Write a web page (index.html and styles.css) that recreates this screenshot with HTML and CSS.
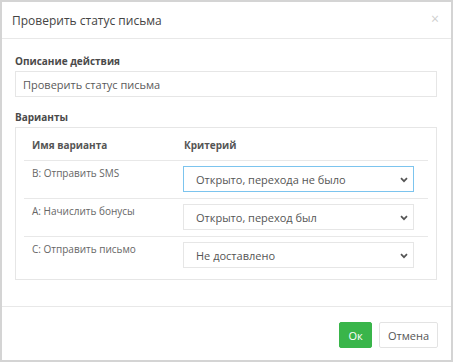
FILE: index.html
```html
<!DOCTYPE html>
<html lang="ru">
<head>
    <meta charset="UTF-8">
    <meta name="viewport" content="width=device-width, initial-scale=1.0">
    <title>Проверить статус письма</title>
    <link rel="stylesheet" href="styles.css">
</head>
<body>
    <div class="modal">
        <div class="modal-header">
            <span class="modal-title">Проверить статус письма</span>
            <span class="close">&times;</span>
        </div>
        <div class="modal-body">
            <label class="field-label">Описание действия</label>
            <input class="text-input" type="text" value="Проверить статус письма">

            <label class="field-label variants-label">Варианты</label>
            <div class="panel">
                <table class="variants">
                    <thead>
                        <tr>
                            <th class="col-name">Имя варианта</th>
                            <th class="col-crit">Критерий</th>
                        </tr>
                    </thead>
                    <tbody>
                        <tr>
                            <td class="name">B: Отправить SMS</td>
                            <td class="crit">
                                <div class="select focused">
                                    <span>Открыто, перехода не было</span>
                                    <svg class="chevron" width="8" height="6" viewBox="0 0 8 6"><path d="M1 1.2 L4 4.2 L7 1.2" fill="none" stroke="#555" stroke-width="1.7"/></svg>
                                </div>
                            </td>
                        </tr>
                        <tr>
                            <td class="name">A: Начислить бонусы</td>
                            <td class="crit">
                                <div class="select">
                                    <span>Открыто, переход был</span>
                                    <svg class="chevron" width="8" height="6" viewBox="0 0 8 6"><path d="M1 1.2 L4 4.2 L7 1.2" fill="none" stroke="#555" stroke-width="1.7"/></svg>
                                </div>
                            </td>
                        </tr>
                        <tr>
                            <td class="name">C: Отправить письмо</td>
                            <td class="crit">
                                <div class="select">
                                    <span>Не доставлено</span>
                                    <svg class="chevron" width="8" height="6" viewBox="0 0 8 6"><path d="M1 1.2 L4 4.2 L7 1.2" fill="none" stroke="#555" stroke-width="1.7"/></svg>
                                </div>
                            </td>
                        </tr>
                    </tbody>
                </table>
            </div>
        </div>
        <div class="modal-footer">
            <button class="btn btn-ok">Ок</button>
            <button class="btn btn-cancel">Отмена</button>
        </div>
    </div>
</body>
</html>
```

FILE: styles.css
```css
* {
    box-sizing: border-box;
}
body {
    margin: 0;
    font-family: 'Open Sans', sans-serif;
    background: #fff;
    color: #555;
}
.modal {
    width: 453px;
    height: 362px;
    border: 2px solid #d4d4d4;
    background: #fff;
    display: flex;
    flex-direction: column;
}
.modal-header {
    height: 37px;
    flex: none;
    border-bottom: 1px solid #e8e8e8;
    display: flex;
    align-items: center;
    justify-content: space-between;
    padding: 0 12px 0 10px;
}
.modal-title {
    font-size: 12px;
    color: #444;
}
.close {
    font-size: 14px;
    color: #cfcfcf;
    line-height: 1;
    margin-top: -2px;
}
.modal-body {
    flex: none;
    padding: 15px 14px 26px 13px;
    border-bottom: 1px solid #e8e8e8;
}
.field-label {
    display: block;
    font-size: 10px;
    font-weight: bold;
    color: #4a4a4a;
    line-height: 15px;
    margin-bottom: 2px;
}
.variants-label {
    margin-top: 13px;
}
.text-input {
    display: block;
    width: 100%;
    height: 26px;
    border: 1px solid #e6e6e6;
    padding: 0 7px;
    font-family: 'Open Sans', sans-serif;
    font-size: 11px;
    color: #5a5a5a;
    outline: none;
}
.panel {
    border: 1px solid #e6e6e6;
    padding: 9px 8px 4px;
}
.variants {
    width: 100%;
    border-collapse: separate;
    border-spacing: 0;
}
.variants th {
    text-align: left;
    font-size: 10px;
    font-weight: bold;
    color: #555;
    line-height: 15px;
    padding: 1px 8px 7px;
    border-bottom: 1px solid #e8e8e8;
}
.variants th.col-name {
    width: 159px;
}
.variants th.col-crit {
    padding-left: 1px;
}
.variants td {
    vertical-align: top;
    border-bottom: 1px solid #e8e8e8;
}
.variants tr:last-child td {
    border-bottom: none;
}
.variants td.name {
    font-size: 10px;
    color: #666;
    line-height: 15px;
    padding: 5px 8px 0;
}
.variants td.crit {
    padding: 5px 14px 6px 0;
}
.variants tr:last-child td.crit {
    padding-bottom: 7px;
}
.select {
    position: relative;
    height: 26px;
    border: 1px solid #e6e6e6;
    padding: 0 12px;
    display: flex;
    align-items: center;
    font-size: 11px;
    color: #555;
}
.select.focused {
    border-color: #7cc4ee;
}
.chevron {
    position: absolute;
    right: 5px;
    top: 10px;
}
.modal-footer {
    flex: 1;
    display: flex;
    justify-content: flex-end;
    align-items: flex-start;
    gap: 7px;
    padding: 15px 13px 0;
}
.btn {
    height: 26px;
    padding: 0;
    font-family: 'Open Sans', sans-serif;
    font-size: 11px;
    border-radius: 2px;
    cursor: pointer;
}
.btn-ok {
    width: 33px;
    background: #39b54a;
    border: 1px solid #39b54a;
    color: #fff;
}
.btn-cancel {
    width: 59px;
    background: #fff;
    border: 1px solid #e3e3e3;
    color: #555;
}
```
